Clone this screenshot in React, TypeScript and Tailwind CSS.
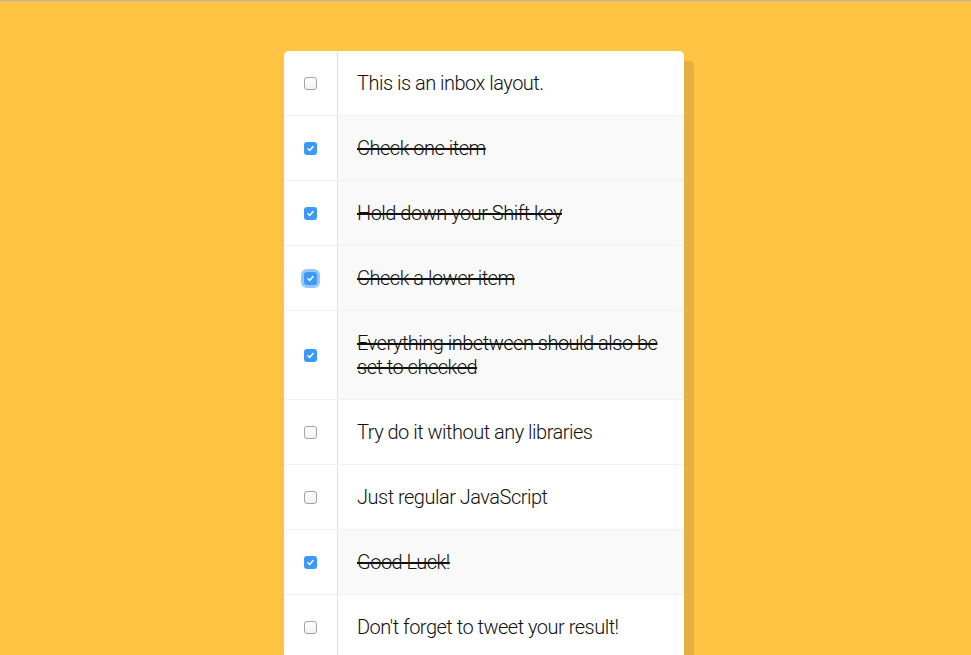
import React from 'react';

type Item = { text: string; checked: boolean; focused?: boolean };

const items: Item[] = [
    { text: 'This is an inbox layout.', checked: false },
    { text: 'Check one item', checked: true },
    { text: 'Hold down your Shift key', checked: true },
    { text: 'Check a lower item', checked: true, focused: true },
    { text: 'Everything inbetween should also be set to checked', checked: true },
    { text: 'Try do it without any libraries', checked: false },
    { text: 'Just regular JavaScript', checked: false },
    { text: 'Good Luck!', checked: true },
    { text: "Don't forget to tweet your result!", checked: false },
];

const Box: React.FC<{ checked: boolean; focused?: boolean }> = ({ checked, focused }) => {
    if (!checked) {
        return (
            <span className="block w-[13px] h-[13px] rounded-[3px] border border-[#a3a3a3] bg-gradient-to-b from-white to-[#f3f3f3]" />
        );
    }
    return (
        <span
            className={`flex items-center justify-center w-[13px] h-[13px] rounded-[3px] bg-[#3b99fc] ${
                focused ? 'shadow-[0_0_0_3px_rgba(59,153,252,0.55)]' : ''
            }`}
        >
            <svg width="9" height="9" viewBox="0 0 9 9" fill="none">
                <path d="M2 4.8 L3.7 6.5 L7 2.6" stroke="white" strokeWidth="1.5" strokeLinecap="round" strokeLinejoin="round" />
            </svg>
        </span>
    );
};

export default function App() {
    return (
        <div className="min-h-[655px] bg-[#ffc444] border-t border-[#b4b4b4] pt-[50px] pb-[50px] pr-[3px]">
            <div className="w-[400px] mx-auto bg-white rounded-[5px] shadow-[10px_10px_0_rgba(0,0,0,0.1)]">
                {items.map((item, i) => (
                    <div
                        key={i}
                        className={`flex items-center ${i < items.length - 1 ? 'border-b border-[#f1f1f1]' : ''}`}
                    >
                        <div className="m-5">
                            <Box checked={item.checked} focused={item.focused} />
                        </div>
                        <p
                            className={`flex-1 self-stretch flex items-center py-5 pl-[19px] pr-5 border-l border-[#d1e2ff] text-[20px] leading-6 font-light tracking-[-0.5px] text-[#111] font-['Roboto',sans-serif] ${
                                item.checked ? 'bg-[#f9f9f9] line-through' : ''
                            } ${i === 0 ? 'rounded-tr-[5px]' : ''}`}
                        >
                            <span>{item.text}</span>
                        </p>
                    </div>
                ))}
            </div>
        </div>
    );
}
